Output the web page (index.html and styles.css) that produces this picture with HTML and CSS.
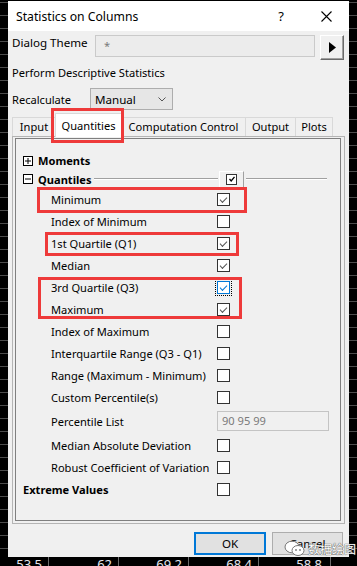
FILE: index.html
```html
<!DOCTYPE html>
<html lang="en">
<head>
    <meta charset="UTF-8">
    <meta name="viewport" content="width=device-width, initial-scale=1.0">
    <title>Statistics on Columns</title>
    <link rel="stylesheet" href="styles.css">
</head>
<body>

    <!-- Dialog window -->
    <div class="dialog">

        <div class="title-bar">
            <span class="title">Statistics on Columns</span>
            <span class="title-help">?</span>
            <span class="title-close">
                <svg width="11" height="11" viewBox="0 0 11 11"><path d="M0.5 0.5 L10.5 10.5 M10.5 0.5 L0.5 10.5" stroke="#000" stroke-width="1.1" fill="none"/></svg>
            </span>
        </div>

        <div class="dialog-body">

            <div class="theme-row">
                <span class="theme-label">Dialog Theme</span>
                <div class="theme-input">*</div>
                <div class="arrow-btn">
                    <svg width="7" height="11" viewBox="0 0 7 11"><path d="M0 0 L7 5.5 L0 11 Z" fill="#000"/></svg>
                </div>
            </div>

            <div class="section-label">Perform Descriptive Statistics</div>

            <div class="recalc-row">
                <span class="recalc-label">Recalculate</span>
                <div class="combo">
                    <span>Manual</span>
                    <svg width="8" height="5" viewBox="0 0 8 5"><path d="M0.5 0.5 L4 4 L7.5 0.5" stroke="#555" stroke-width="1" fill="none"/></svg>
                </div>
            </div>

            <!-- Tabs -->
            <div class="tabs">
                <div class="tab tab-input">Input</div>
                <div class="tab tab-quant active">Quantities</div>
                <div class="tab tab-comp">Computation Control</div>
                <div class="tab tab-out">Output</div>
                <div class="tab tab-plots">Plots</div>
                <div class="mark mark-tab"></div>
            </div>

            <div class="panel">
                <div class="group">

                    <div class="tree-row tree-first">
                        <svg class="expander" width="10" height="10" viewBox="0 0 10 10"><rect x="0.5" y="0.5" width="9" height="9" fill="#fff" stroke="#000"/><path d="M2 5 H8 M5 2 V8" stroke="#000"/></svg>
                        <span class="tree-name">Moments</span>
                    </div>

                    <div class="tree-row tree-quant">
                        <svg class="expander" width="10" height="10" viewBox="0 0 10 10"><rect x="0.5" y="0.5" width="9" height="9" fill="#fff" stroke="#000"/><path d="M2 5 H8" stroke="#000"/></svg>
                        <span class="tree-name">Quantiles</span>
                        <span class="rule"></span>
                        <span class="mini-btn"><span class="mini-box"><svg width="8" height="8" viewBox="0 0 8 8"><path d="M1.5 4 L3.2 6 L6.5 1.8" stroke="#000" stroke-width="1.3" fill="none"/></svg></span></span>
                        <span class="rule rule-right"></span>
                    </div>

                    <div class="opt-row"><span class="opt-label">Minimum</span><span class="check checked"></span></div>
                    <div class="opt-row"><span class="opt-label">Index of Minimum</span><span class="check"></span></div>
                    <div class="opt-row"><span class="opt-label">1st Quartile (Q1)</span><span class="check checked"></span></div>
                    <div class="opt-row"><span class="opt-label">Median</span><span class="check checked"></span></div>
                    <div class="opt-row"><span class="opt-label">3rd Quartile (Q3)</span><span class="check checked focused"></span></div>
                    <div class="opt-row"><span class="opt-label">Maximum</span><span class="check checked"></span></div>
                    <div class="opt-row"><span class="opt-label">Index of Maximum</span><span class="check"></span></div>
                    <div class="opt-row"><span class="opt-label">Interquartile Range (Q3 - Q1)</span><span class="check"></span></div>
                    <div class="opt-row"><span class="opt-label">Range (Maximum - Minimum)</span><span class="check"></span></div>
                    <div class="opt-row"><span class="opt-label">Custom Percentile(s)</span><span class="check"></span></div>
                    <div class="opt-row opt-tall"><span class="opt-label">Percentile List</span><span class="list-input">90 95 99</span></div>
                    <div class="opt-row"><span class="opt-label">Median Absolute Deviation</span><span class="check"></span></div>
                    <div class="opt-row"><span class="opt-label">Robust Coefficient of Variation</span><span class="check"></span></div>
                    <div class="opt-row opt-top"><span class="opt-label top-label">Extreme Values</span><span class="check"></span></div>

                    <!-- red marks drawn on the screenshot -->
                    <div class="mark mark-min"></div>
                    <div class="mark mark-q1"></div>
                    <div class="mark mark-q3"></div>
                </div>
            </div>

            <div class="button-row">
                <div class="btn btn-ok">OK</div>
                <div class="btn">Cancel</div>
            </div>
        </div>

        <!-- watermark -->
        <div class="watermark">
            <svg width="22" height="17" viewBox="0 0 22 17"><ellipse cx="8" cy="7" rx="7" ry="5.8" fill="#fff" stroke="#777"/><ellipse cx="14" cy="10.5" rx="6" ry="5" fill="#fff" stroke="#777"/><circle cx="12" cy="10" r="0.9" fill="#777"/><circle cx="16" cy="10" r="0.9" fill="#777"/></svg>
            <span>数据绘图</span>
        </div>
    </div>

    <!-- worksheet peeking out below -->
    <div class="sheet-row">
        <span class="cell c1">53.5</span>
        <span class="cell c2">62</span>
        <span class="cell c3">69.2</span>
        <span class="cell c4">68.4</span>
        <span class="cell c5">58.8</span>
    </div>

</body>
</html>
```

FILE: styles.css
```css
* {
    box-sizing: border-box;
}

body {
    margin: 0;
    width: 357px;
    height: 566px;
    overflow: hidden;
    background-color: #000;
    background-image: repeating-linear-gradient(to bottom, #4c4c4c 0 1px, transparent 1px 13px);
    background-position: 0 2px;
    font-family: "Noto Sans", "Open Sans", sans-serif;
    font-size: 11.1px;
    color: #000;
    white-space: nowrap;
}

/* Dialog */
.dialog {
    position: relative;
    margin: 1px 0 0 8px;
    width: 341px;
    height: 556px;
    background: #f0f0f0;
    display: flex;
    flex-direction: column;
}

.title-bar {
    height: 30px;
    background: #fff;
    display: flex;
    align-items: center;
    padding-left: 8px;
}

.title {
    flex: 1;
    font-size: 12.2px;
}

.title-help {
    width: 14px;
    margin-right: 15px;
    text-align: center;
    font-size: 13px;
}

.title-close {
    width: 46px;
    display: flex;
    justify-content: center;
}

.dialog-body {
    flex: 1;
    display: flex;
    flex-direction: column;
    padding: 4px 4px 2px 4px;
}

/* Theme row */
.theme-row {
    display: flex;
    align-items: flex-start;
    height: 25px;
}

.theme-label {
    width: 83px;
    line-height: 16px;
    font-size: 11.6px;
}

.theme-input {
    width: 220px;
    height: 22px;
    border: 1px solid #cacaca;
    background: #ececec;
    color: #7a7a7a;
    padding-left: 8px;
    line-height: 20px;
}

.arrow-btn {
    margin-left: 5px;
    width: 24px;
    height: 25px;
    border: 1px solid;
    border-color: #fff #6a6a6a #6a6a6a #fff;
    box-shadow: inset -1px -1px 0 #a0a0a0;
    background: #f0f0f0;
    display: flex;
    align-items: center;
    justify-content: center;
}

.section-label {
    margin-top: 4px;
    height: 18px;
    line-height: 18px;
}

/* Recalculate */
.recalc-row {
    margin-top: 6px;
    height: 22px;
    display: flex;
    align-items: center;
}

.recalc-label {
    width: 78px;
}

.combo {
    width: 83px;
    height: 22px;
    border: 1px solid #adadad;
    background: #e6e6e6;
    display: flex;
    align-items: center;
    justify-content: space-between;
    padding: 0 6px 0 4px;
    font-size: 11.6px;
}

/* Tabs */
.tabs {
    position: relative;
    margin-top: 3px;
    height: 23px;
    display: flex;
    align-items: flex-end;
}

.tab {
    height: 19px;
    border: 1px solid #d9d9d9;
    border-bottom: none;
    border-right: none;
    text-align: center;
    line-height: 18px;
    background: #f0f0f0;
}

.tab-input { width: 43px; }
.tab-quant { width: 67px; }
.tab-comp { width: 123px; }
.tab-out { width: 50px; }
.tab-plots { width: 38px; border-right: 1px solid #d9d9d9; }

.tab.active {
    position: relative;
    z-index: 1;
    height: 24px;
    margin-bottom: -1px;
    background: #fff;
    border-right: 1px solid #d9d9d9;
    padding-top: 3px;
}

.tab.active + .tab {
    border-left: none;
}

/* Panel */
.panel {
    height: 388px;
    border: 1px solid #b4b4b4;
    padding: 1px 3px 2px 2px;
    display: flex;
}

.group {
    position: relative;
    flex: 1;
    border: 1px solid #7f7f7f;
    padding-top: 12px;
}

.tree-row {
    display: flex;
    align-items: center;
    padding-left: 7px;
    font-weight: 700;
}

.tree-first { height: 19px; }
.tree-quant { height: 18px; padding-right: 13px; }

.expander {
    margin-right: 5px;
}

.rule {
    flex: 1;
    margin-left: 3px;
    border-top: 1px solid #a0a0a0;
    border-bottom: 1px solid #fff;
}

.rule-right {
    flex: 0 0 81px;
    margin-left: 2px;
}

.mini-btn {
    width: 25px;
    height: 17px;
    margin-left: 1px;
    border: 1px solid;
    border-color: #fff #a0a0a0 #a0a0a0 #fff;
    background: #f0f0f0;
    display: flex;
    justify-content: center;
    align-items: center;
}

.mini-box {
    width: 11px;
    height: 11px;
    border: 1px solid #333;
    background: #fff;
    display: flex;
    align-items: center;
    justify-content: center;
}

.opt-row {
    height: 22px;
    display: flex;
    align-items: center;
    padding-left: 35px;
}

.opt-tall {
    height: 26px;
}

.opt-label {
    width: 166px;
}

.opt-top {
    padding-left: 7px;
}

.top-label {
    width: 194px;
    font-weight: 700;
}

.check {
    position: relative;
    width: 13px;
    height: 13px;
    border: 1px solid #333;
    background: #fff;
}

.check.checked::after {
    content: "";
    position: absolute;
    left: 2px;
    top: 1px;
    width: 6px;
    height: 3px;
    border-left: 1.3px solid #555;
    border-bottom: 1.3px solid #555;
    transform: translate(0, 2px) rotate(-45deg);
}

.check.focused {
    border-color: #0078d7;
    outline: 1px dotted #000;
    outline-offset: 1px;
}

.check.focused::after {
    border-color: #0078d7;
}

.list-input {
    width: 112px;
    height: 20px;
    border: 1px solid #c4c4c4;
    background: #f0f0f0;
    color: #7a7a7a;
    padding-left: 4px;
    line-height: 18px;
}

/* Red marks */
.mark {
    position: absolute;
    border: 3px solid #ee3a3a;
    z-index: 2;
}

.mark-tab { left: 39px; top: -5px; width: 73px; height: 35px; }
.mark-min { left: 21px; top: 48px; width: 210px; height: 26px; }
.mark-q1 { left: 29px; top: 93px; width: 194px; height: 24px; }
.mark-q3 { left: 22px; top: 138px; width: 204px; height: 42px; }

/* Buttons */
.button-row {
    margin-top: 8px;
    height: 23px;
    display: flex;
    justify-content: flex-end;
    gap: 6px;
    padding-right: 2px;
}

.btn {
    width: 71px;
    height: 23px;
    border: 1px solid #adadad;
    background: #e1e1e1;
    text-align: center;
    line-height: 21px;
    font-size: 11.6px;
}

.btn-ok {
    width: 72px;
    border: 2px solid #0078d7;
    line-height: 19px;
}

.watermark {
    position: absolute;
    left: 276px;
    top: 539px;
    display: flex;
    align-items: center;
    gap: 2px;
    z-index: 3;
    font-family: "Noto Sans CJK SC", sans-serif;
    font-size: 12px;
    color: #fff;
    text-shadow: 0 0 1px #444, 0 0 1px #444;
}

/* Sheet behind */
.sheet-row {
    display: flex;
    height: 9px;
    overflow: hidden;
    background: #000;
}

.cell {
    height: 9px;
    border-right: 1px solid #6a6a6a;
    text-align: right;
    color: #e6e6ee;
    font-size: 13px;
    line-height: 14px;
    padding-right: 6px;
}

.c1 { width: 49px; }
.c2 { width: 70px; }
.c3 { width: 70px; }
.c4 { width: 70px; }
.c5 { width: 72px; padding-right: 8px; }
```
